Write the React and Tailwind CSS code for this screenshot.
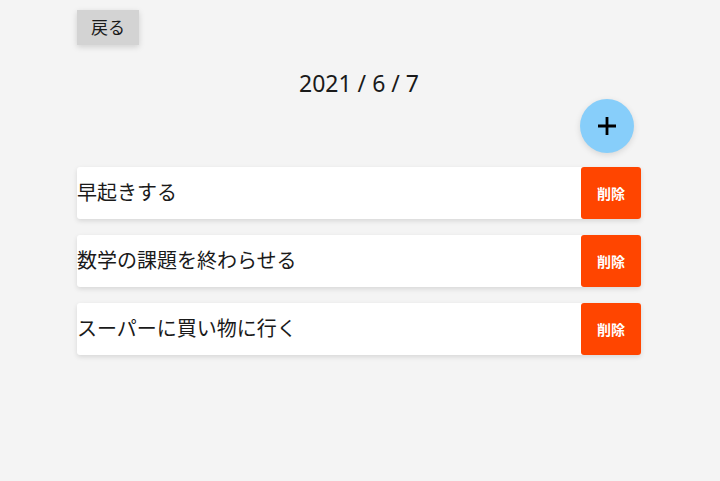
import { useState } from "react";

const initialTodos = ["早起きする", "数学の課題を終わらせる", "スーパーに買い物に行く"];

export default function App() {
  const [todos, setTodos] = useState(initialTodos);

  const handleDelete = (index) => {
    setTodos((list) => list.filter((_, i) => i !== index));
  };

  return (
    <div
      className="min-h-[481px] w-full bg-[#f4f4f4] text-[#1a1a1a]"
      style={{ fontFamily: '"Noto Sans", "Noto Sans CJK JP", sans-serif' }}
    >
      <div className="ml-[77px] w-[564px] pt-[10px]">
        <button className="h-[35px] w-[62px] bg-[#d3d3d3] text-[17px] shadow-[0_2px_6px_rgba(0,0,0,0.15)]">
          戻る
        </button>

        <div className="mt-[23px] text-center text-[23px] leading-[30px]">2021 / 6 / 7</div>

        <div className="mt-[1px] flex justify-end pr-[7px]">
          <button className="flex h-[54px] w-[54px] items-center justify-center rounded-full bg-[#87cefa] shadow-[0_2px_6px_rgba(0,0,0,0.12)]">
            <svg width="20" height="20" viewBox="0 0 20 20">
              <path d="M10 1v18M1 10h18" stroke="#000" strokeWidth="2.8" />
            </svg>
          </button>
        </div>

        <div className="mt-[14px] flex flex-col gap-4">
          {todos.map((todo, i) => (
            <div
              key={todo}
              className="flex h-[52px] items-center justify-between rounded-[3px] bg-white shadow-[0_2px_5px_rgba(0,0,0,0.12)]"
            >
              <span className="text-[20px]">{todo}</span>
              <button
                onClick={() => handleDelete(i)}
                className="flex h-full w-[60px] items-center justify-center rounded-[3px] bg-[#ff4500] text-[14px] font-bold text-white"
              >
                削除
              </button>
            </div>
          ))}
        </div>
      </div>
    </div>
  );
}
